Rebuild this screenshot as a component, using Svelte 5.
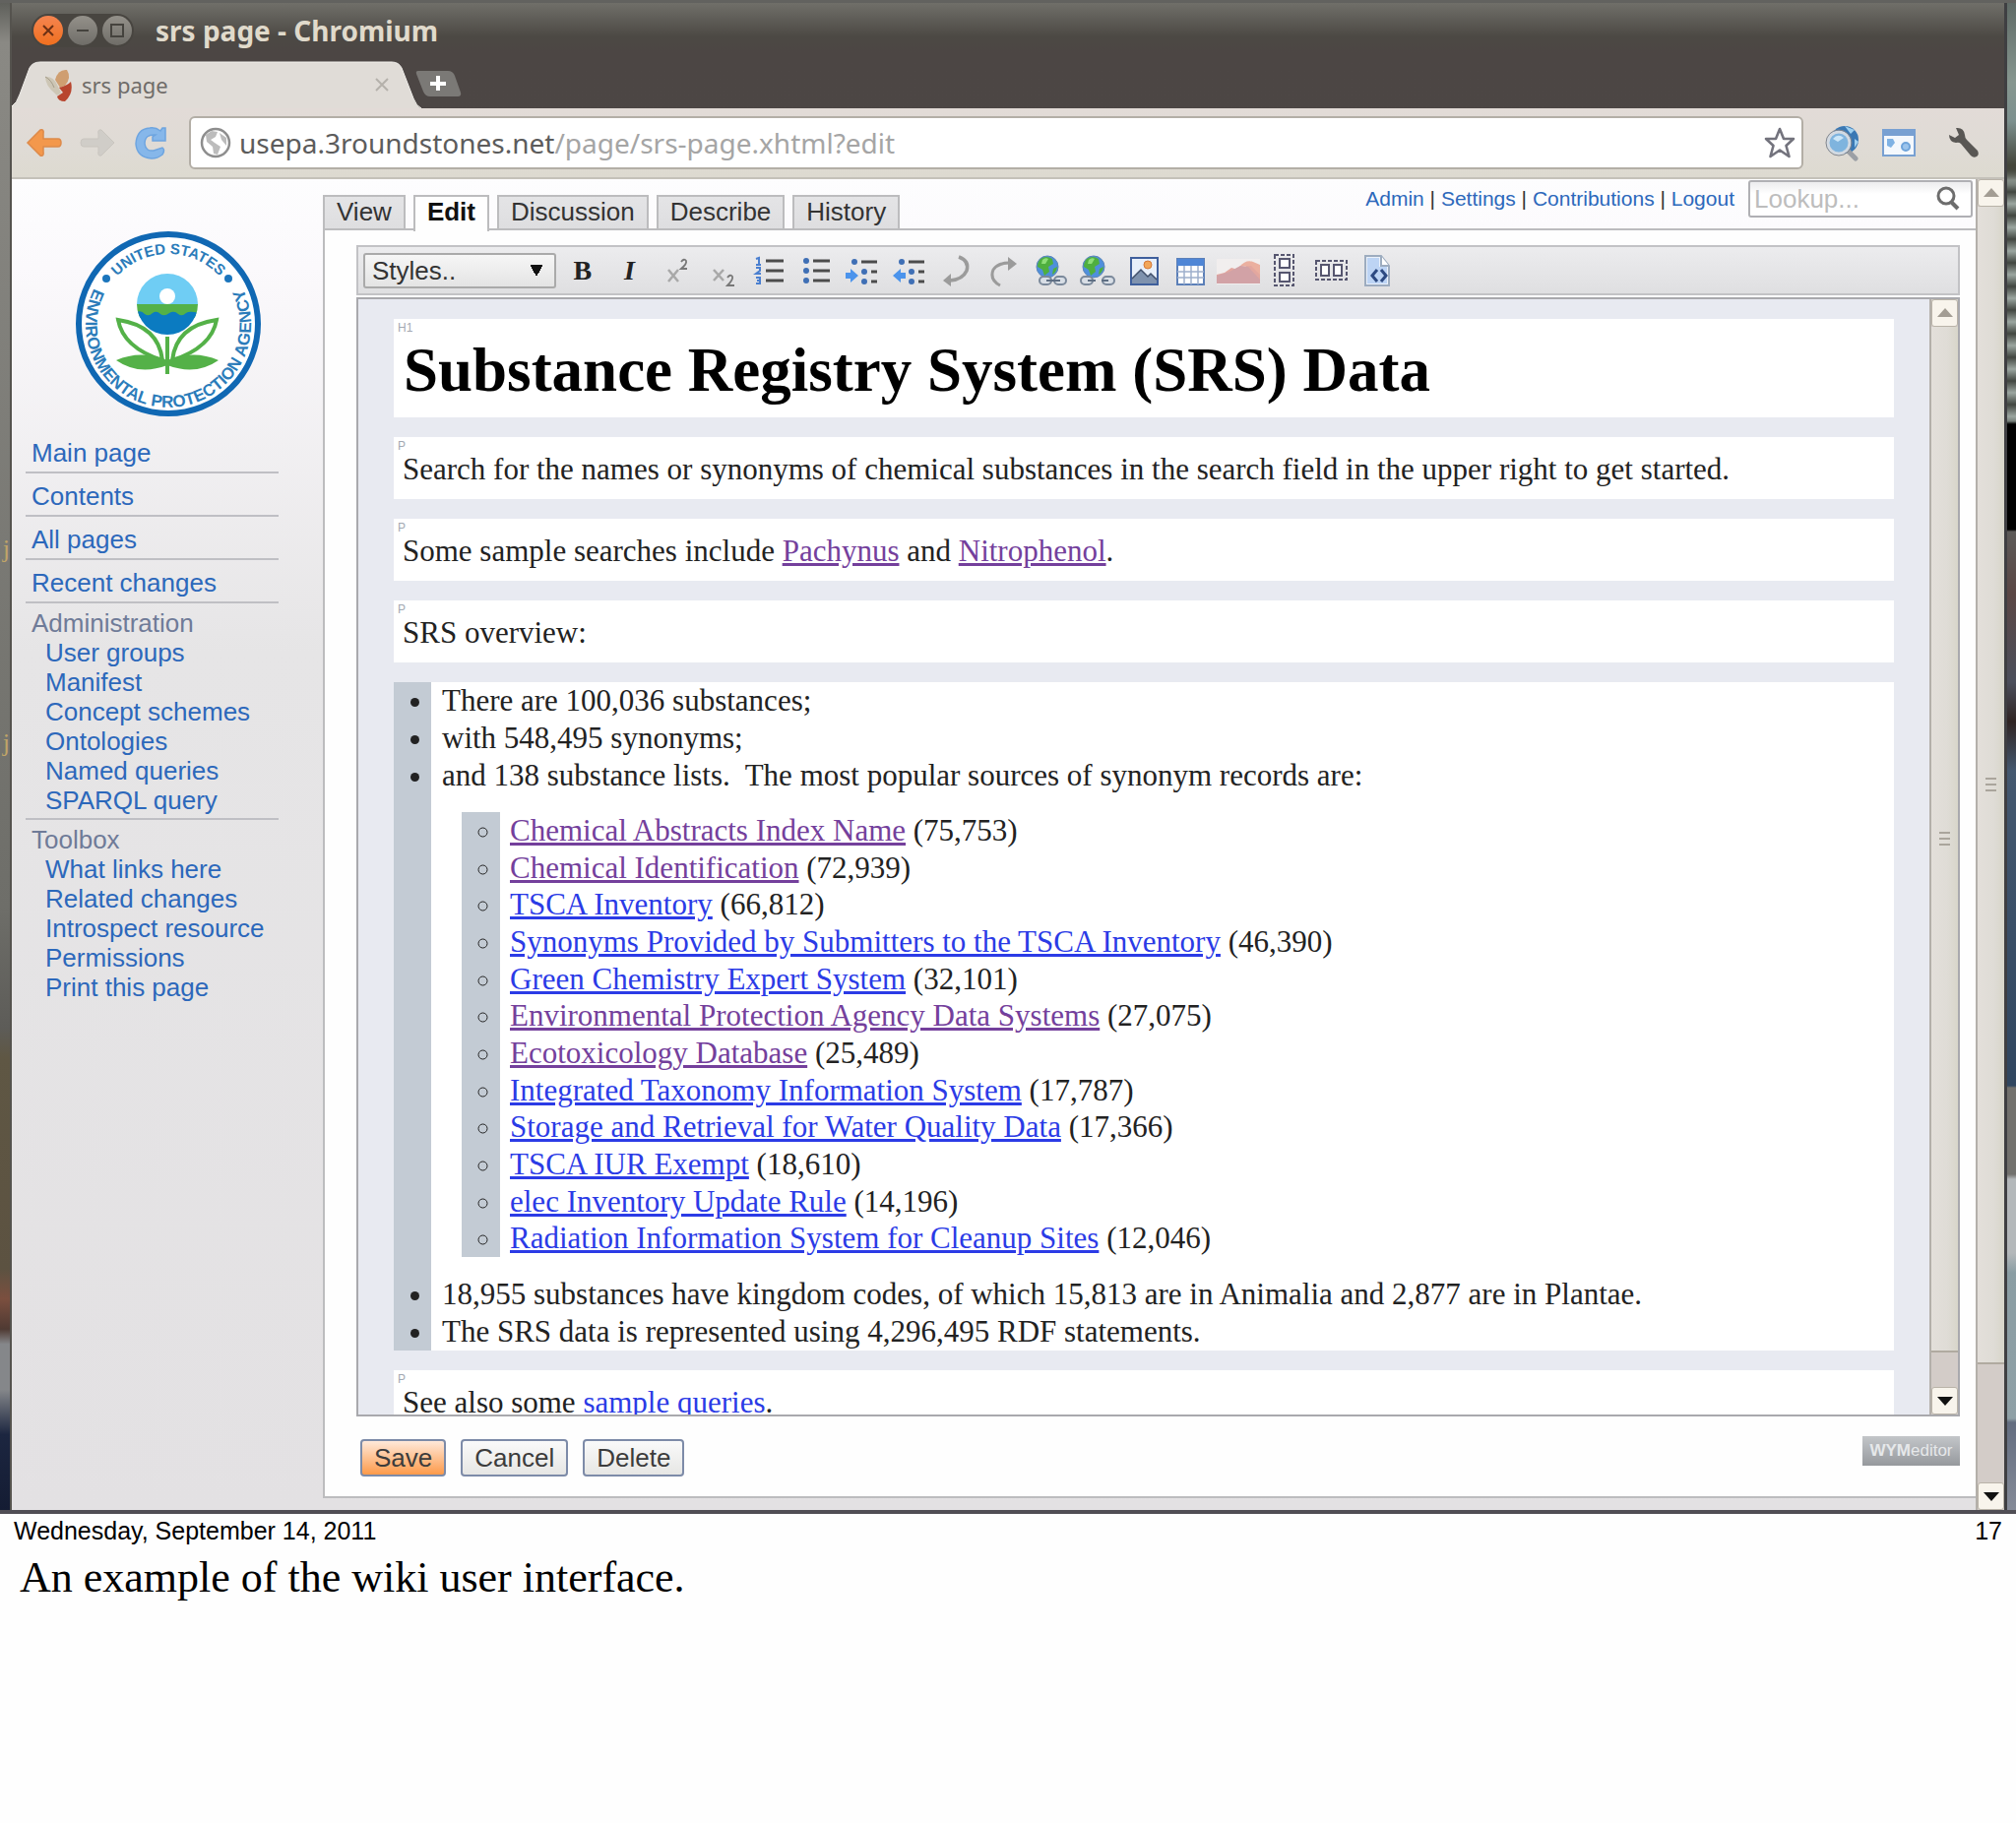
<script lang="ts">
  // Slide page: a browser window showing the SRS wiki page in edit mode,
  // with the date, slide number and speaker note below it.

  interface Source {
    name: string;
    count: string;
    visited?: boolean;
  }

  const pageTabs = ['View', 'Edit', 'Discussion', 'Describe', 'History'];
  const activeTab = 'Edit';

  const userLinks = ['Admin', 'Settings', 'Contributions', 'Logout'];

  const mainLinks = ['Main page', 'Contents', 'All pages', 'Recent changes'];

  const groups = [
    {
      title: 'Administration',
      links: ['User groups', 'Manifest', 'Concept schemes', 'Ontologies', 'Named queries', 'SPARQL query'],
    },
    {
      title: 'Toolbox',
      links: ['What links here', 'Related changes', 'Introspect resource', 'Permissions', 'Print this page'],
    },
  ];

  const sources: Source[] = [
    { name: 'Chemical Abstracts Index Name', count: '75,753', visited: true },
    { name: 'Chemical Identification', count: '72,939', visited: true },
    { name: 'TSCA Inventory', count: '66,812' },
    { name: 'Synonyms Provided by Submitters to the TSCA Inventory', count: '46,390' },
    { name: 'Green Chemistry Expert System', count: '32,101' },
    { name: 'Environmental Protection Agency Data Systems', count: '27,075', visited: true },
    { name: 'Ecotoxicology Database', count: '25,489', visited: true },
    { name: 'Integrated Taxonomy Information System', count: '17,787' },
    { name: 'Storage and Retrieval for Water Quality Data', count: '17,366' },
    { name: 'TSCA IUR Exempt', count: '18,610' },
    { name: 'elec Inventory Update Rule', count: '14,196' },
    { name: 'Radiation Information System for Cleanup Sites', count: '12,046' },
  ];

  let lookup = $state('');
</script>

{#snippet globe()}
  <circle cx="12" cy="12" r="11" fill="#4f8fdc" stroke="#5d86b8" stroke-width="1" />
  <path d="M5 4 Q11 0 17 4 L18 9 L13 12 L14 17 L9 21 L7 15 L2 12 Q2 7 5 4Z" fill="#4faf3f" />
  <path d="M7 5 Q10 2 13 4 L10 9 L6 9Z" fill="#8ede78" />
  <path d="M18 14 L22 12 Q21 18 17 20Z" fill="#4faf3f" />
{/snippet}

{#snippet scrollbar(trackHeight: number)}
  <div class="scrollbar">
    <button type="button" class="scroll-btn" aria-label="Scroll up">
      <svg width="16" height="10" viewBox="0 0 16 10"><path d="M0 9 L8 0 L16 9Z" fill="#a39d94" /></svg>
    </button>
    <div class="thumb"><i></i><i></i><i></i></div>
    <div class="track" style="height: {trackHeight}px"></div>
    <button type="button" class="scroll-btn" aria-label="Scroll down">
      <svg width="16" height="9" viewBox="0 0 16 9"><path d="M0 0 L16 0 L8 9Z" fill="#111" /></svg>
    </button>
  </div>
{/snippet}

<div class="shot">
  <div class="desktop-left">
    <span>j</span>
    <span>j</span>
  </div>

  <div class="window">
    <header class="titlebar">
      <div class="win-buttons">
        <button type="button" class="win-btn close" aria-label="Close">
          <svg viewBox="0 0 30 30"><path d="M10 10 L20 20 M20 10 L10 20" /></svg>
        </button>
        <button type="button" class="win-btn" aria-label="Minimize">
          <svg viewBox="0 0 30 30"><path d="M9 15 H21" /></svg>
        </button>
        <button type="button" class="win-btn" aria-label="Maximize">
          <svg viewBox="0 0 30 30"><rect x="9" y="9" width="12" height="12" /></svg>
        </button>
      </div>
      <h2>srs page - Chromium</h2>
    </header>

    <div class="tabstrip">
      <div class="browser-tab">
        <svg class="tab-shape" viewBox="0 0 416 48" preserveAspectRatio="none">
          <path d="M0 48 V46 Q5 43 8 34 L18 7 Q21 1 29 1 H386 Q393 1 396 7 L408 38 Q411 46 416 48Z" fill="#e0dcd7" />
          <path d="M0 46 Q5 43 8 34 L18 7 Q21 1 29 1 H386 Q393 1 396 7 L408 38 Q411 46 416 48" fill="none" stroke="#f1efeb" stroke-width="1" />
        </svg>
        <svg class="favicon" width="30" height="34" viewBox="0 0 30 34">
          <path d="M2 9 Q10 8 14 17 L18 25 Q14 30 12 26 Q2 18 2 9Z" fill="#cdc6b5" />
          <path d="M2 9 Q8 12 11 20" stroke="#a49c8a" fill="none" />
          <path d="M12 12 Q15 1 24 2 Q29 10 22 18 L17 20Z" fill="#cf9e70" />
          <path d="M16 20 Q24 18 28 14 Q31 26 22 34 Q15 34 14 29 L20 25Z" fill="#b8452e" />
        </svg>
        <span class="tab-title">srs page</span>
        <button type="button" class="tab-close" aria-label="Close tab">
          <svg width="14" height="14" viewBox="0 0 14 14"><path d="M1 1 L13 13 M13 1 L1 13" stroke="#b5b1ab" stroke-width="2" /></svg>
        </button>
      </div>
      <button type="button" class="new-tab" aria-label="New tab">
        <svg width="48" height="28" viewBox="0 0 48 28">
          <path d="M3 1 H33 Q38 1 40 6 L46 23 Q47 27 43 27 H15 Q10 27 8 22 L1 4 Q0 1 3 1Z" fill="#7b7976" />
          <path d="M23 6 V21 M15 14 H31" stroke="#fff" stroke-width="4" />
        </svg>
      </button>
    </div>

    <div class="toolbar">
      <button type="button" aria-label="Back">
        <svg width="38" height="30" viewBox="0 0 38 30"><path d="M2 15 L15 2 Q19 1 18 6 V11 H33 Q36 11 36 15 Q36 19 33 19 H18 V24 Q19 29 15 28Z" fill="#f3984c" stroke="#dd8a4a" stroke-width="1.5" /></svg>
      </button>
      <button type="button" aria-label="Forward">
        <svg width="38" height="30" viewBox="0 0 38 30"><path d="M36 15 L23 2 Q19 1 20 6 V11 H5 Q2 11 2 15 Q2 19 5 19 H20 V24 Q19 29 23 28Z" fill="#d0cdc8" stroke="#c9c5bf" stroke-width="1" /></svg>
      </button>
      <button type="button" class="reload" aria-label="Reload">
        <svg width="34" height="36" viewBox="0 0 34 36"><path d="M32 3 V16 H19 V12 L22 10 Q11 9 11 19 Q12 27 20 26 L29 23 Q32 25 29 30 Q24 34 18 34 Q3 33 2 19 Q3 4 16 3 Q22 2 27 6 L29 3Z" fill="#86b7ea" stroke="#6ea5e0" stroke-width="1.5" /></svg>
      </button>
      <div class="omnibox">
        <svg width="32" height="32" viewBox="0 0 32 32">
          <circle cx="16" cy="16" r="14" fill="#fff" stroke="#8d8d8d" stroke-width="2.5" />
          <path d="M6 8 L12 4 L18 5 L16 10 L11 13 L15 16 L21 20 L18 28 L14 27 L13 20 L7 15Z M20 6 L27 11 L27 19 L22 13Z" fill="#bcbcbc" />
        </svg>
        <a href="#url">usepa.3roundstones.net<span>/page/srs-page.xhtml?edit</span></a>
        <button type="button" class="star" aria-label="Bookmark">
          <svg width="34" height="34" viewBox="0 0 34 34"><path d="M17 3 L21 13 L31 13 L23.500 20 L26.500 31 L17 24.500 L7.500 31 L10.500 20 L3 13 L13 13Z" fill="#fff" stroke="#73737d" stroke-width="2.600" stroke-linejoin="round" /></svg>
        </button>
      </div>
      <button type="button" class="ext" aria-label="Search extension">
        <svg width="36" height="38" viewBox="0 0 36 38">
          <circle cx="20" cy="16" r="14" fill="#3a78b4" />
          <path d="M20 2 L30 6 L26 10 Z M30 15 L34 18 L30 24Z" fill="#9fd0f0" />
          <path d="M23 27 L31 35" stroke="#9b9fa5" stroke-width="5" stroke-linecap="round" />
          <circle cx="14" cy="19" r="11" fill="#7fb4de" stroke="#d3dae2" stroke-width="3" />
          <circle cx="14" cy="19" r="13" fill="none" stroke="#80868f" stroke-width="1" />
          <path d="M8 15 Q13 9 19 14 L13 18Z" fill="#cbe6f8" />
        </svg>
      </button>
      <button type="button" class="ext" aria-label="Window extension">
        <svg width="34" height="28" viewBox="0 0 34 28">
          <rect x="1" y="1" width="32" height="26" fill="#f4f8fd" stroke="#78a0d2" stroke-width="2" />
          <rect x="1" y="1" width="32" height="6" fill="#78a0d2" />
          <path d="M5 10 H11 L13 14 L9 19 L5 17Z" fill="#7fb2e4" />
          <circle cx="24" cy="18" r="4" fill="#9cc4ec" stroke="#6ea3da" stroke-width="2" />
        </svg>
      </button>
      <button type="button" class="wrench" aria-label="Settings">
        <svg width="34" height="34" viewBox="0 0 34 34"><path d="M9 2 Q17 1 18 9 Q18 12 20 14 L31 25 Q33 29 30 31 Q27 33 24 30 L14 18 Q12 16 9 17 Q2 16 2 9 L8 12 L12 9Z" fill="#595754" /></svg>
      </button>
    </div>

    <div class="viewport">
      <div class="page">
        <aside>
          <svg class="seal" width="190" height="190" viewBox="-95 -95 190 190" role="img" aria-label="EPA seal">
            <defs>
              <path id="arc-top" d="M-71 0 A71 71 0 0 1 71 0" />
              <path id="arc-bottom" d="M-59 -59 A84 84 0 1 0 59 -59" />
              <clipPath id="ball"><circle cx="-1" cy="-20" r="31" /></clipPath>
            </defs>
            <circle r="91" fill="#fff" stroke="#1068b3" stroke-width="6" />
            <text class="seal-text" font-size="15"><textPath href="#arc-top" startOffset="50%" text-anchor="middle">UNITED STATES</textPath></text>
            <text class="seal-text" font-size="17"><textPath href="#arc-bottom" startOffset="50%" text-anchor="middle">ENVIRONMENTAL PROTECTION AGENCY</textPath></text>
            <circle cx="-63" cy="-46" r="4" fill="#1b75bc" />
            <circle cx="61" cy="-46" r="4" fill="#1b75bc" />
            <g clip-path="url(#ball)">
              <rect x="-34" y="-54" width="68" height="35" fill="#6fcdf4" />
              <rect x="-34" y="-20" width="68" height="14" fill="#54b148" />
              <path d="M-34 -11 Q-28 -15 -24 -10 Q-20 -7 -16 -11 Q-12 -14 -8 -10 Q-4 -7 1 -11 Q6 -14 10 -10 Q14 -7 18 -11 Q22 -14 34 -10 V14 H-34Z" fill="#0b7bc1" />
            </g>
            <circle cx="-1" cy="-28" r="8" fill="#fff" />
            <g fill="none" stroke="#54b148" stroke-width="4">
              <path d="M-51 -4 Q-46 24 -6 37 Q-10 2 -51 -4Z" />
              <path d="M49 -4 Q44 24 4 37 Q8 2 49 -4Z" />
              <path d="M-1 13 V51" />
            </g>
            <path d="M-53 37 Q-28 26 -1 37 Q26 26 51 37 Q28 53 -1 42 Q-30 53 -53 37Z" fill="#54b148" />
          </svg>

          <nav class="main-links">
            {#each mainLinks as link}
              <a href="#{link}">{link}</a>
            {/each}
          </nav>
          {#each groups as group}
            <nav class="group">
              <h3>{group.title}</h3>
              {#each group.links as link}
                <a href="#{link}">{link}</a>
              {/each}
            </nav>
          {/each}
        </aside>

        <div class="main">
          <div class="head">
            <nav class="page-tabs">
              {#each pageTabs as tab}
                <a href="#{tab}" class:active={tab === activeTab}>{tab}</a>
              {/each}
            </nav>
            <nav class="user-links">
              {#each userLinks as link, i}{#if i > 0}{' | '}{/if}<a href="#{link}">{link}</a>{/each}
            </nav>
            <form class="lookup">
              <input type="text" placeholder="Lookup..." aria-label="Lookup" bind:value={lookup} />
              <svg width="26" height="26" viewBox="0 0 26 26"><circle cx="11" cy="10" r="8" fill="none" stroke="#6d6d6d" stroke-width="3" /><path d="M16 16 L23 23" stroke="#6d6d6d" stroke-width="4" /></svg>
            </form>
          </div>

          <div class="panel">
            <div class="wym-bar">
              <select aria-label="Styles">
                <option>Styles..</option>
              </select>
              <div class="tools">
                <button type="button" class="txt" title="Bold"><b>B</b></button>
                <button type="button" class="txt" title="Emphasis"><b><i>I</i></b></button>
                <button type="button" title="Superscript">
                  <svg viewBox="0 0 36 36"><path d="M10 17 L20 29 M20 17 L10 29" stroke="#a8a8a8" stroke-width="2.500" /><path d="M23 9 Q26 5 28 8 Q29 11 23 16 H29" fill="none" stroke="#777" stroke-width="1.800" /></svg>
                </button>
                <button type="button" title="Subscript">
                  <svg viewBox="0 0 36 36"><path d="M9 17 L19 28 M19 17 L9 28" stroke="#a8a8a8" stroke-width="2.500" /><path d="M23 25 Q26 21 28 24 Q29 27 23 33 H30" fill="none" stroke="#777" stroke-width="1.800" /></svg>
                </button>
                <button type="button" title="Ordered List">
                  <svg viewBox="0 0 36 36"><path d="M14 8 H32 M14 18 H32 M14 28 H32" stroke="#4c4c4c" stroke-width="3" /><path d="M4 6 L7 5 V12 M4 12 H9 M4 15 H8 V18 L4 21 H9 M4 25 H8 V31 H4 M5 28 H8" fill="none" stroke="#4a7fd0" stroke-width="2" /></svg>
                </button>
                <button type="button" title="Unordered List">
                  <svg viewBox="0 0 36 36"><path d="M14 8 H31 M14 18 H31 M14 28 H31" stroke="#4c4c4c" stroke-width="3" /><g fill="#3f6fb5"><circle cx="7" cy="8" r="3" /><circle cx="7" cy="18" r="3" /><circle cx="7" cy="28" r="3" /></g></svg>
                </button>
                <button type="button" title="Indent">
                  <svg viewBox="0 0 36 36"><path d="M16 9 H32 M26 19 H32 M26 29 H32" stroke="#4c4c4c" stroke-width="3" /><g fill="#3f6fb5"><circle cx="9" cy="9" r="3" /><circle cx="19" cy="19" r="3" /><circle cx="19" cy="29" r="3" /></g><path d="M0 20 H5 V16 L13 23 L5 30 V26 H0Z" fill="#4c94ec" /></svg>
                </button>
                <button type="button" title="Outdent">
                  <svg viewBox="0 0 36 36"><path d="M16 9 H32 M26 19 H32 M26 29 H32" stroke="#4c4c4c" stroke-width="3" /><g fill="#3f6fb5"><circle cx="9" cy="9" r="3" /><circle cx="19" cy="19" r="3" /><circle cx="19" cy="29" r="3" /></g><path d="M13 20 H8 V16 L0 23 L8 30 V26 H13Z" fill="#4c94ec" /></svg>
                </button>
                <button type="button" title="Undo">
                  <svg viewBox="0 0 36 36"><path d="M20 4 Q31 8 28 18 Q24 27 11 28" fill="none" stroke="#9b9b9b" stroke-width="3.500" /><path d="M4 28 L12 21 V34Z" fill="#9b9b9b" /></svg>
                </button>
                <button type="button" title="Redo">
                  <svg viewBox="0 0 36 36"><path d="M14 33 Q3 27 7 17 Q12 10 23 10" fill="none" stroke="#9b9b9b" stroke-width="3" /><path d="M31 11 L22 4 V18Z" fill="#9b9b9b" /></svg>
                </button>
                <button type="button" title="Link">
                  <svg viewBox="0 0 36 36">
                    <g transform="translate(3 2)">{@render globe()}</g>
                    <g fill="#d8dee6" stroke="#7b899b" stroke-width="2"><rect x="7" y="24" width="12" height="8" rx="4" /><rect x="22" y="24" width="12" height="8" rx="4" /><path d="M14 28 H28" stroke="#5f6f84" /></g>
                  </svg>
                </button>
                <button type="button" title="Unlink">
                  <svg viewBox="0 0 36 36">
                    <g transform="translate(2 2)">{@render globe()}</g>
                    <g fill="#d8dee6" stroke="#7b899b" stroke-width="2"><rect x="1" y="24" width="12" height="8" rx="4" /><rect x="23" y="24" width="12" height="8" rx="4" /><path d="M8 28 H16 M22 28 H29" stroke="#5f6f84" /></g>
                  </svg>
                </button>
                <button type="button" title="Image">
                  <svg viewBox="0 0 36 36"><rect x="5" y="5" width="27" height="27" fill="#e8effa" stroke="#3f5f9c" stroke-width="2" /><path d="M6 31 V26 L15 17 L22 24 L25 21 L31 26 V31Z" fill="#7f92ae" /><path d="M6 26 L15 17 L22 24 L25 21 L31 27" fill="none" stroke="#41506b" stroke-width="1.500" /><circle cx="22" cy="12" r="4" fill="#f2a65a" stroke="#d5793a" /></svg>
                </button>
                <button type="button" title="Table">
                  <svg viewBox="0 0 36 36"><rect x="4" y="6" width="27" height="26" fill="#fff" stroke="#5b7fb8" stroke-width="2" /><rect x="4" y="6" width="27" height="7" fill="#4f86d6" /><path d="M4 19 H31 M4 25 H31 M11 13 V32 M18 13 V32 M25 13 V32" stroke="#9fb0cc" stroke-width="1.500" /></svg>
                </button>
                <button type="button" title="Chart">
                  <svg class="wide" viewBox="0 0 46 36"><rect x="1" y="6" width="44" height="26" fill="#f1eeee" /><path d="M1 22 L9 20 L16 15 L26 18 L34 10 L45 20 V31 H1Z" fill="#e3a79f" /><path d="M24 14 Q31 6 38 9 L45 12 V22 L36 13Z" fill="#ebb0a0" /><path d="M1 31 V23 L14 19 L25 13 L33 14 L45 27 V31Z" fill="#d2a2a6" /></svg>
                </button>
                <button type="button" title="Inline vertical">
                  <svg viewBox="0 0 36 36"><rect x="8" y="2" width="19" height="31" fill="none" stroke="#56566f" stroke-width="2" stroke-dasharray="4 2" /><rect x="13" y="6" width="10" height="9" fill="#fff" stroke="#56566f" stroke-width="2" /><rect x="13" y="20" width="10" height="9" fill="#fff" stroke="#56566f" stroke-width="2" /></svg>
                </button>
                <button type="button" title="Inline horizontal">
                  <svg viewBox="0 0 36 36"><rect x="2" y="8" width="31" height="19" fill="none" stroke="#56566f" stroke-width="2" stroke-dasharray="4 2" /><rect x="7" y="12" width="8" height="11" fill="#fff" stroke="#56566f" stroke-width="2" /><rect x="20" y="12" width="8" height="11" fill="#fff" stroke="#56566f" stroke-width="2" /></svg>
                </button>
                <button type="button" title="HTML">
                  <svg viewBox="0 0 36 36"><path d="M5 3 H21 L29 13 V33 H5Z" fill="#eaf1fb" stroke="#9dacbf" stroke-width="2" /><path d="M7 5 H19 V14 H27 V31 H7Z" fill="#bdd4f4" /><path d="M21 3 V13 H29" fill="#fff" stroke="#9dacbf" stroke-width="2" /><path d="M17 17 L12 23 L17 29 M21 17 L26 23 L21 29" fill="none" stroke="#2d4a82" stroke-width="3" /></svg>
                </button>
              </div>
            </div>

            <div class="editor">
              <div class="doc">
                <div class="block h1"><span class="tag">H1</span><h1>Substance Registry System (SRS) Data</h1></div>
                <div class="block"><span class="tag">P</span><p>Search for the names or synonyms of chemical substances in the search field in the upper right to get started.</p></div>
                <div class="block"><span class="tag">P</span><p>Some sample searches include <a class="visited" href="#pachynus">Pachynus</a> and <a class="visited" href="#nitrophenol">Nitrophenol</a>.</p></div>
                <div class="block"><span class="tag">P</span><p>SRS overview:</p></div>
                <ul class="outer">
                  <li>There are 100,036 substances;</li>
                  <li>with 548,495 synonyms;</li>
                  <li>
                    and 138 substance lists.&nbsp; The most popular sources of synonym records are:
                    <ul class="inner">
                      {#each sources as s}
                        <li><a href="#{s.name}" class:visited={s.visited}>{s.name}</a> ({s.count})</li>
                      {/each}
                    </ul>
                  </li>
                  <li>18,955 substances have kingdom codes, of which 15,813 are in Animalia and 2,877 are in Plantae.</li>
                  <li>The SRS data is represented using 4,296,495 RDF statements.</li>
                </ul>
                <div class="block"><span class="tag">P</span><p>See also some <a href="#queries">sample queries</a>.</p></div>
              </div>
              {@render scrollbar(35)}
            </div>

            <div class="actions">
              <button type="button" class="save">Save</button>
              <button type="button">Cancel</button>
              <button type="button">Delete</button>
              <a class="wym" href="#wymeditor"><b>WYM</b>editor</a>
            </div>
          </div>
        </div>
      </div>
      {@render scrollbar(120)}
    </div>
  </div>

  <div class="desktop-right"></div>
</div>

<footer>
  <div class="meta"><span>Wednesday, September 14, 2011</span><span>17</span></div>
  <p>An example of the wiki user interface.</p>
</footer>

<style>
  :global(body) {
    margin: 0;
    background: #fefefe;
    font-family: "Liberation Sans", Arial, sans-serif;
    font-size: 26px;
    line-height: 30px;
  }
  a { color: #2c68bb; text-decoration: none; }
  p, h1, h2, h3, ul { margin: 0; padding: 0; }
  svg { display: block; flex: none; }
  button {
    background: none;
    border: none;
    padding: 0;
    font: inherit;
    cursor: pointer;
  }

  .shot {
    display: flex;
    border-top: 3px solid #62625f;
    border-bottom: 4px solid #504e55;
  }
  .desktop-left {
    display: flex;
    flex-direction: column;
    align-items: flex-end;
    gap: 167px;
    box-sizing: border-box;
    flex: none;
    width: 12px;
    padding-top: 540px;
    border-right: 2px solid #55534e;
    overflow: hidden;
    background: linear-gradient(#5f605b, #8a8984 40px, #6e6e69 60%, #5d5c58 68%, #5f5744 70%, #5c5241 84%, #7b4f3f 86%, #4f3a33 88%, #85878a 89%, #85878a 92%, #1c2640 95%, #141c33);
    color: #c0a468;
    font-family: "Liberation Serif", serif;
  }
  .desktop-right {
    box-sizing: border-box;
    flex: none;
    width: 12px;
    border-left: 3px solid #3f3f42;
    background:
      linear-gradient(#5f6a66, #86968f 80px, #7d918f 120px, #43453a 165px, transparent 185px, transparent 425px, #000 428px, #000 535px, #5c5a58 537px, #5a4644 600px, #4b4e5b 690px, #2f2423 730px, #44586f 780px, #30465f 1100px, #72716d 1102px, #72716d 1190px, #b4b8ba 1195px, #b4b8ba 1270px, #8a9da3 1290px, #8fa0a6 1438px, #636d80 1442px, #858b98),
      repeating-linear-gradient(#414640 0, #9ba6a0 12px, #414640 24px);
  }

  .window {
    flex: 1;
    min-width: 0;
    background: linear-gradient(#706f69, #4c4944 34px, #4c4644 50px, #4e4747);
  }
  .titlebar {
    display: flex;
    align-items: center;
    gap: 22px;
    height: 56px;
    padding-left: 20px;
  }
  .win-buttons {
    display: flex;
    gap: 5px;
    padding: 2px;
    border-radius: 18px;
    background: #484540;
  }
  .win-btn {
    width: 30px;
    height: 30px;
    border-radius: 50%;
    background: linear-gradient(#94918a, #6f6d68);
  }
  .win-btn svg { fill: none; stroke: #45433e; stroke-width: 2; }
  .win-btn.close { background: linear-gradient(#f58450, #f0701f); }
  .win-btn.close svg { stroke: #6b3014; }
  h2 {
    font: bold 28px/32px "Noto Sans", sans-serif;
    color: #e0dacb;
  }

  .tabstrip {
    display: flex;
    align-items: flex-end;
    height: 51px;
  }
  .browser-tab {
    position: relative;
    display: flex;
    align-items: center;
    box-sizing: border-box;
    width: 416px;
    height: 48px;
    padding: 0 33px 0 32px;
  }
  .tab-shape {
    position: absolute;
    inset: 0;
    width: 100%;
    height: 100%;
  }
  .favicon { position: relative; }
  .tab-title {
    position: relative;
    flex: 1;
    padding-left: 9px;
    font: 22px/30px "Noto Sans", sans-serif;
    color: #6f6c69;
  }
  .tab-close { position: relative; }
  .new-tab { align-self: center; margin-left: -6px; }

  .toolbar {
    display: flex;
    align-items: center;
    gap: 16px;
    height: 70px;
    padding: 0 24px 0 14px;
    border-bottom: 2px solid #c4c1b9;
    background: linear-gradient(#e2dbd7, #dfdbd5 60%, #dddad0);
  }
  .reload { margin-left: 2px; }
  .omnibox {
    display: flex;
    align-items: center;
    gap: 8px;
    flex: 1;
    box-sizing: border-box;
    height: 54px;
    margin: 0 6px;
    padding: 0 5px 0 9px;
    border: 2px solid #b3aea6;
    border-radius: 6px;
    background: #fff;
  }
  .omnibox a {
    flex: 1;
    font: 28px/36px "Noto Sans", sans-serif;
    color: #5c5c5c;
  }
  .omnibox a span { color: #a5a5a5; }
  .ext { margin-right: 6px; }
  .wrench { margin-left: 10px; }

  .viewport { display: flex; }
  .page {
    display: flex;
    flex: 1;
    min-width: 0;
    background: linear-gradient(#fdfdfe, #fbf9fc 90px, #e6e5e6 480px, #e3e1e3);
  }

  aside {
    box-sizing: border-box;
    flex: none;
    width: 316px;
    padding: 52px 45px 0 14px;
  }
  .seal { margin: 0 auto 13px 50px; }
  .seal-text {
    font-family: "Liberation Sans", Arial, sans-serif;
    font-weight: bold;
    fill: #2b7cba;
  }
  aside a, h3 { display: block; padding-left: 6px; }
  .main-links a {
    padding-top: 8px;
    padding-bottom: 4px;
    border-bottom: 2px solid #bfbfc4;
  }
  .group { padding: 5px 0 3px; }
  .group + .group { border-top: 2px solid #bfbfc4; }
  .group a { padding-left: 20px; }
  h3 { font-weight: normal; font-size: 26px; color: #6f7b98; }

  .main {
    display: flex;
    flex-direction: column;
    flex: 1;
    min-width: 0;
    padding-bottom: 12px;
  }
  .head {
    display: flex;
    align-items: flex-start;
    height: 50px;
    padding-right: 3px;
  }
  .page-tabs {
    display: flex;
    flex: 1;
    gap: 8px;
    padding-top: 16px;
  }
  .page-tabs a {
    box-sizing: border-box;
    height: 34px;
    padding: 0 12px;
    border: 2px solid #bcbcbe;
    border-bottom: none;
    background: linear-gradient(#e4e4e6, #dedee0);
    color: #333;
    line-height: 30px;
  }
  .page-tabs .active {
    position: relative;
    height: 37px;
    background: #fefefe;
    color: #111;
    font-weight: bold;
  }
  .user-links {
    padding: 6px 14px 0 0;
    font-size: 21px;
    line-height: 28px;
    color: #333;
    white-space: pre;
  }
  .lookup {
    display: flex;
    align-items: center;
    box-sizing: border-box;
    width: 228px;
    height: 38px;
    margin-top: 1px;
    padding: 0 10px 0 4px;
    border: 2px solid #b0b0b4;
    border-radius: 3px;
    background: linear-gradient(#ececee, #fff 12px);
  }
  .lookup input {
    flex: 1;
    min-width: 0;
    padding: 0;
    border: none;
    outline: none;
    background: none;
    font: inherit;
  }
  .lookup input::placeholder { color: #bdbdbd; }

  .panel {
    flex: 1;
    padding: 15px 16px 20px 32px;
    border: 2px solid #bcbcbe;
    border-right: none;
    background: #fefefe;
  }
  .wym-bar {
    display: flex;
    align-items: center;
    box-sizing: border-box;
    height: 51px;
    padding-left: 5px;
    border: 2px solid #c2c2c5;
    background: linear-gradient(#ececee, #dfdfe1);
  }
  .wym-bar select {
    appearance: none;
    box-sizing: border-box;
    width: 196px;
    height: 36px;
    padding: 0 7px;
    border: 2px solid #aaa;
    border-radius: 3px;
    background:
      conic-gradient(from -30deg at 50% 100%, #111 60deg, transparent 0) right 12px center / 12px 12px no-repeat,
      linear-gradient(#f6f6f6, #e4e4e4);
    color: #333;
    font: inherit;
  }
  .tools {
    display: grid;
    grid-template-columns: repeat(18, 1fr);
    width: 856px;
    margin-left: 3px;
  }
  .tools button {
    display: flex;
    align-items: center;
    justify-content: center;
    min-width: 0;
    height: 40px;
  }
  .tools svg { width: 36px; height: 36px; }
  .tools .wide { width: 46px; }
  .txt { font-family: "Liberation Serif", serif; font-size: 28px; color: #222; }

  .editor {
    display: flex;
    box-sizing: border-box;
    height: 1137px;
    margin-top: 2px;
    border: 2px solid #a9a9ad;
    overflow: hidden;
    background: #e8eaf1;
  }
  .doc {
    display: flex;
    flex-direction: column;
    gap: 20px;
    flex: 1;
    padding: 20px 36px 0;
    color: #222;
    font: 31px/37px "Liberation Serif", "Times New Roman", serif;
  }
  .doc a { color: #2b3be6; text-decoration: underline; }
  .doc a.visited { color: #74409c; }
  .block {
    position: relative;
    flex: none;
    padding: 14px 9px 12px;
    background: #fff;
  }
  .block.h1 { padding: 16px 10px 12px; }
  .tag {
    position: absolute;
    top: 3px;
    left: 4px;
    color: #a3a8b2;
    font: 12px/12px "Liberation Sans", Arial, sans-serif;
  }
  h1 { font-size: 63px; line-height: 72px; color: #000; }
  .doc ul { padding-left: 42px; }
  .doc li { padding-left: 7px; }
  .outer {
    flex: none;
    line-height: 38px;
    background: linear-gradient(to right, #c3cbd4 38px, #fff 38px);
  }
  /* Rows share the list height evenly. */
  .doc .inner {
    display: grid;
    grid-auto-rows: 1fr;
    min-height: 452px;
    margin: 18px 0 19px 20px;
    background: linear-gradient(to right, #c3cbd4 39px, #fff 39px);
    line-height: 37px;
    list-style: circle;
  }

  .actions {
    display: flex;
    align-items: flex-start;
    gap: 15px;
    padding: 23px 0 0 4px;
  }
  .actions button {
    box-sizing: border-box;
    height: 38px;
    padding: 0 12px;
    border: 2px solid #7d8ba8;
    border-radius: 4px;
    background: linear-gradient(#fafafa, #e6e6e4);
    color: #3c3c3c;
  }
  .actions .save { background: linear-gradient(#ffe9da, #fd9a4a); }
  .wym {
    display: flex;
    align-items: center;
    justify-content: center;
    width: 99px;
    height: 30px;
    margin: -3px 0 0 auto;
    background: linear-gradient(#c3c6c9, #96999d);
    color: #e6e8ea;
    font-size: 17px;
  }

  .scrollbar {
    display: flex;
    flex-direction: column;
    box-sizing: border-box;
    flex: none;
    width: 29px;
    border-left: 2px solid #b4b0aa;
    background: #d3ccc8;
  }
  .scroll-btn {
    display: flex;
    align-items: center;
    justify-content: center;
    height: 28px;
    border: 1px solid #b9b3a8;
    border-radius: 3px;
    background: #f8f4ec;
  }
  .thumb {
    display: flex;
    flex: 1;
    flex-direction: column;
    align-items: center;
    justify-content: center;
    gap: 4px;
    border-bottom: 2px solid #b0aaa0;
    background: linear-gradient(to right, #e3dfda, #dfdcd6 60%, #d8d6ca);
  }
  .thumb i { width: 11px; height: 2px; background: #aaa59c; }

  footer { color: #000; }
  .meta {
    display: flex;
    justify-content: space-between;
    padding: 2px 14px 0;
    font-size: 25px;
  }
  footer p {
    padding: 8px 20px;
    font: 44px/50px "Liberation Serif", "Times New Roman", serif;
  }
</style>
